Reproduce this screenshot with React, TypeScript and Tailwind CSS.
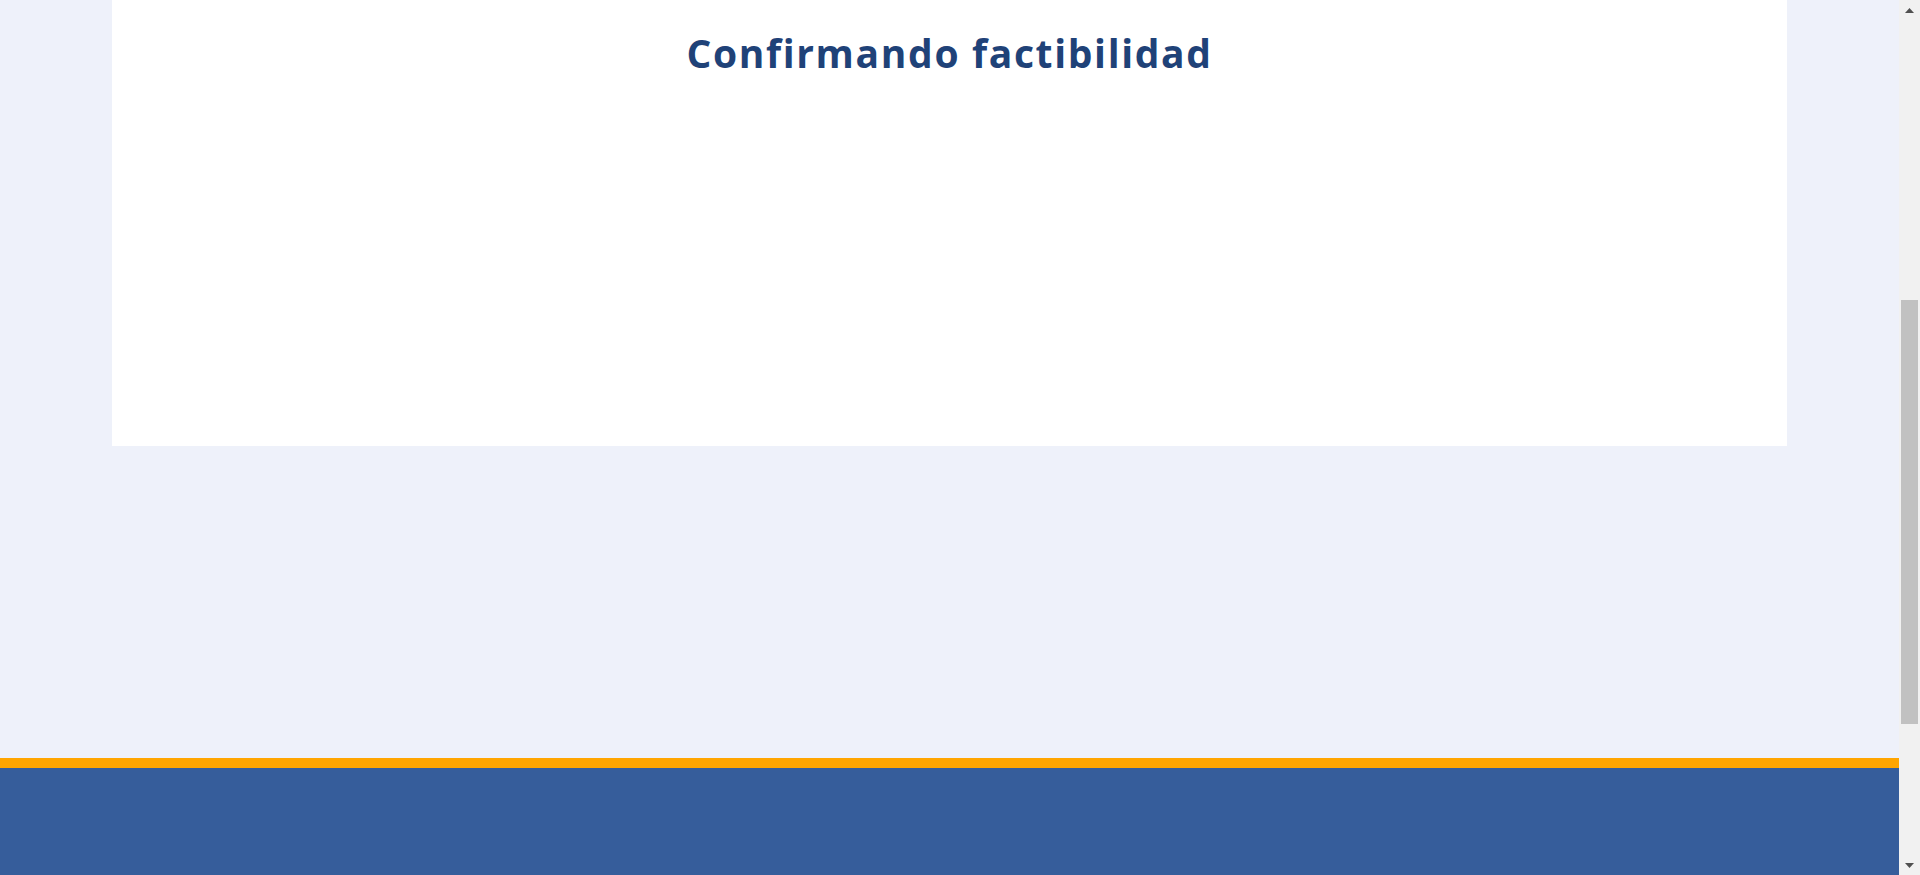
import React from "react";

export default function App() {
  return (
    <div className="flex h-[875px] w-full overflow-hidden bg-[#eef1fa]">
      <div className="flex flex-1 flex-col">
        <div className="flex-1 bg-[#eef1fa]">
          <div className="mx-auto h-[446px] w-[1675px] bg-white pt-[29px] text-center">
            <h1
              className="text-[39px] font-bold leading-[48px] tracking-[1.65px] text-[#1f4278] [font-variant-ligatures:none]"
              style={{ fontFamily: '"Open Sans", "Lato", sans-serif' }}
            >
              Confirmando factibilidad
            </h1>
          </div>
        </div>
        <div className="h-[10px] bg-[#ffa500]" />
        <div className="h-[107px] bg-[#365d9b]" />
      </div>
      <div className="flex w-[21px] flex-col bg-[#f1f1f1]">
        <div className="flex h-[20px] items-center justify-center">
          <svg width="9" height="5" viewBox="0 0 9 5">
            <polygon points="4.5,0 9,5 0,5" fill="#505050" />
          </svg>
        </div>
        <div className="h-[280px]" />
        <div className="mx-auto h-[424px] w-[17px] bg-[#c1c1c1]" />
        <div className="flex-1" />
        <div className="flex h-[20px] items-center justify-center">
          <svg width="9" height="5" viewBox="0 0 9 5">
            <polygon points="0,0 9,0 4.5,5" fill="#505050" />
          </svg>
        </div>
      </div>
    </div>
  );
}
